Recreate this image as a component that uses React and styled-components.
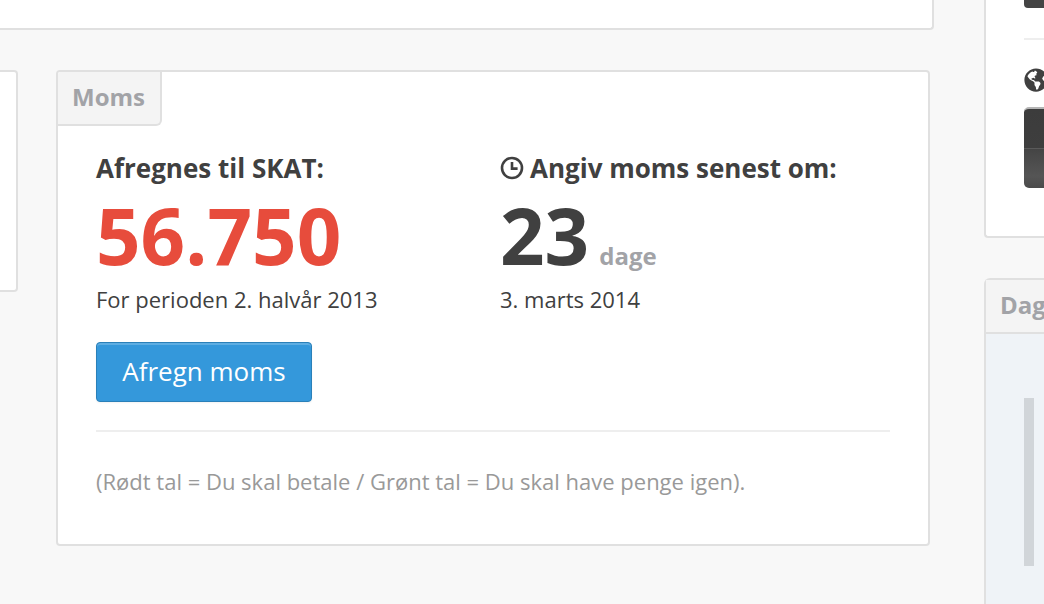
import React from "react";
import styled, { createGlobalStyle } from "styled-components";
import { FaGlobeAmericas } from "react-icons/fa";

const Global = createGlobalStyle`
  html, body { margin: 0; padding: 0; background: #f8f8f8; overflow: hidden; }
  * { box-sizing: border-box; }
`;

const Page = styled.div`
  display: flex;
  width: 1044px;
  height: 604px;
  overflow: hidden;
  background: #f8f8f8;
  font-family: "Open Sans", "Liberation Sans", sans-serif;
  color: #404040;
`;

const Main = styled.div`
  flex: 0 0 934px;
  min-width: 0;
  display: flex;
  flex-direction: column;
  gap: 40px;
`;

const Side = styled.div`
  flex: 0 0 110px;
  margin-left: 50px;
  display: flex;
  flex-direction: column;
  gap: 40px;
`;

const TopCard = styled.div`
  height: 30px;
  background: #fff;
  border: solid #e0e0e0;
  border-width: 0 2px 2px 0;
  border-bottom-right-radius: 4px;
`;

const Row = styled.div`
  display: flex;
  gap: 38px;
  align-items: flex-start;
`;

const StubCard = styled.div`
  flex: 0 0 18px;
  height: 222px;
  background: #fff;
  border: solid #e0e0e0;
  border-width: 2px 2px 2px 0;
  border-radius: 0 4px 4px 0;
`;

const Card = styled.section`
  flex: 0 0 874px;
  min-width: 0;
  height: 476px;
  background: #fff;
  border: 2px solid #e0e0e0;
  border-radius: 4px;
`;

const Tab = styled.div`
  display: inline-block;
  height: 54px;
  padding: 8px 15px 0 14px;
  background: #f4f4f4;
  border: solid #e0e0e0;
  border-width: 0 2px 2px 0;
  border-radius: 2px 0 6px 0;
  font-size: 24px;
  line-height: 34px;
  font-weight: 700;
  color: #a2a3a7;
`;

const Body = styled.div`
  padding: 25px 38px 0;
`;

const Columns = styled.div`
  display: flex;
`;

const Col = styled.div`
  flex: 0 0 ${(p) => p.$width}px;
  min-width: 0;
`;

const Title = styled.h3`
  margin: 0;
  display: flex;
  align-items: center;
  gap: 6px;
  font-size: 26px;
  line-height: 34px;
  font-weight: 700;
  color: #404040;
  white-space: nowrap;
`;

const BigRow = styled.div`
  display: flex;
  align-items: baseline;
  gap: 10px;
  margin-top: 8px;
  height: 91px;
`;

const Big = styled.span`
  font-size: 78px;
  line-height: 84px;
  font-weight: 700;
  color: ${(p) => p.$color};
`;

const Unit = styled.span`
  font-size: 24px;
  font-weight: 700;
  color: #a2a3a7;
`;

const Sub = styled.p`
  margin: 0;
  font-size: 22px;
  line-height: 30px;
  color: #404040;
`;

const Button = styled.button`
  display: block;
  width: 216px;
  height: 60px;
  margin-top: 28px;
  padding: 0 0 3px;
  background: #3498db;
  border: 1px solid #2a80b9;
  border-radius: 4px;
  box-shadow: inset 0 2px 0 #5dade2, 0 1px 2px rgba(0, 0, 0, 0.05);
  color: #fff;
  font-family: inherit;
  font-size: 26px;
  line-height: 34px;
`;

const Rule = styled.hr`
  margin: 28px 0 0;
  border: 0;
  height: 2px;
  background: #eeeeee;
`;

const Note = styled.p`
  margin: 34px 0 0;
  font-size: 22px;
  line-height: 30px;
  color: #999999;
`;

const SideCard = styled.div`
  flex: none;
  width: 110px;
  height: 238px;
  padding: 0 0 0 38px;
  background: #fff;
  border: solid #e0e0e0;
  border-width: 0 0 2px 2px;
  border-bottom-left-radius: 4px;
`;

const DarkStub = styled.div`
  height: 8px;
  background: #444;
  border-radius: 0 0 0 4px;
`;

const SideRule = styled.hr`
  margin: 30px 0 0;
  border: 0;
  height: 2px;
  background: #eeeeee;
`;

const GlobeRow = styled.div`
  margin-top: 28px;
  height: 24px;
  color: #404040;
  font-size: 24px;
  line-height: 0;
`;

const DarkPanel = styled.div`
  height: 81px;
  margin-top: 15px;
  border-radius: 5px 0 0 5px;
  border-top: 2px solid #b5b5b5;
  background: linear-gradient(
    #3c3c3c 0,
    #3e3e3e 49%,
    #5a5a5a 49%,
    #5a5a5a 51%,
    #454545 51%,
    #555 85%,
    #4a4a4a 100%
  );
`;

const ChartCard = styled.div`
  flex: none;
  width: 110px;
  height: 340px;
  background: #eff3f7;
  border: solid #e0e0e0;
  border-width: 2px 0 0 2px;
  border-top-left-radius: 6px;
`;

const ChartHead = styled.div`
  height: 54px;
  padding: 8px 0 0 14px;
  background: #f4f4f4;
  border-bottom: 2px solid #e0e0e0;
  font-size: 24px;
  line-height: 34px;
  font-weight: 700;
  color: #a2a3a7;
  white-space: nowrap;
  overflow: hidden;
`;

const ChartBar = styled.div`
  width: 10px;
  height: 168px;
  margin: 64px 0 0 38px;
  background: #d1d5d9;
`;

const ClockIcon = () => (
  <svg width="24" height="24" viewBox="0 0 24 24" fill="none" stroke="#404040">
    <circle cx="12" cy="12" r="10" strokeWidth="2.6" />
    <path d="M12 6v6.6h5.6" strokeWidth="2.6" />
  </svg>
);

export default function App() {
  return (
    <Page>
      <Global />
      <Main>
        <TopCard />
        <Row>
          <StubCard />
          <Card>
            <Tab>Moms</Tab>
            <Body>
              <Columns>
                <Col $width={404}>
                  <Title>Afregnes til SKAT:</Title>
                  <BigRow>
                    <Big $color="#e74c3c">56.750</Big>
                  </BigRow>
                  <Sub>For perioden 2. halvår 2013</Sub>
                  <Button>Afregn moms</Button>
                </Col>
                <Col $width={390}>
                  <Title>
                    <ClockIcon />
                    Angiv moms senest om:
                  </Title>
                  <BigRow>
                    <Big $color="#404040">23</Big>
                    <Unit>dage</Unit>
                  </BigRow>
                  <Sub>3. marts 2014</Sub>
                </Col>
              </Columns>
              <Rule />
              <Note>(Rødt tal = Du skal betale / Grønt tal = Du skal have penge igen).</Note>
            </Body>
          </Card>
        </Row>
      </Main>
      <Side>
        <SideCard>
          <DarkStub />
          <SideRule />
          <GlobeRow>
            <FaGlobeAmericas />
          </GlobeRow>
          <DarkPanel />
        </SideCard>
        <ChartCard>
          <ChartHead>Dagens</ChartHead>
          <ChartBar />
        </ChartCard>
      </Side>
    </Page>
  );
}
